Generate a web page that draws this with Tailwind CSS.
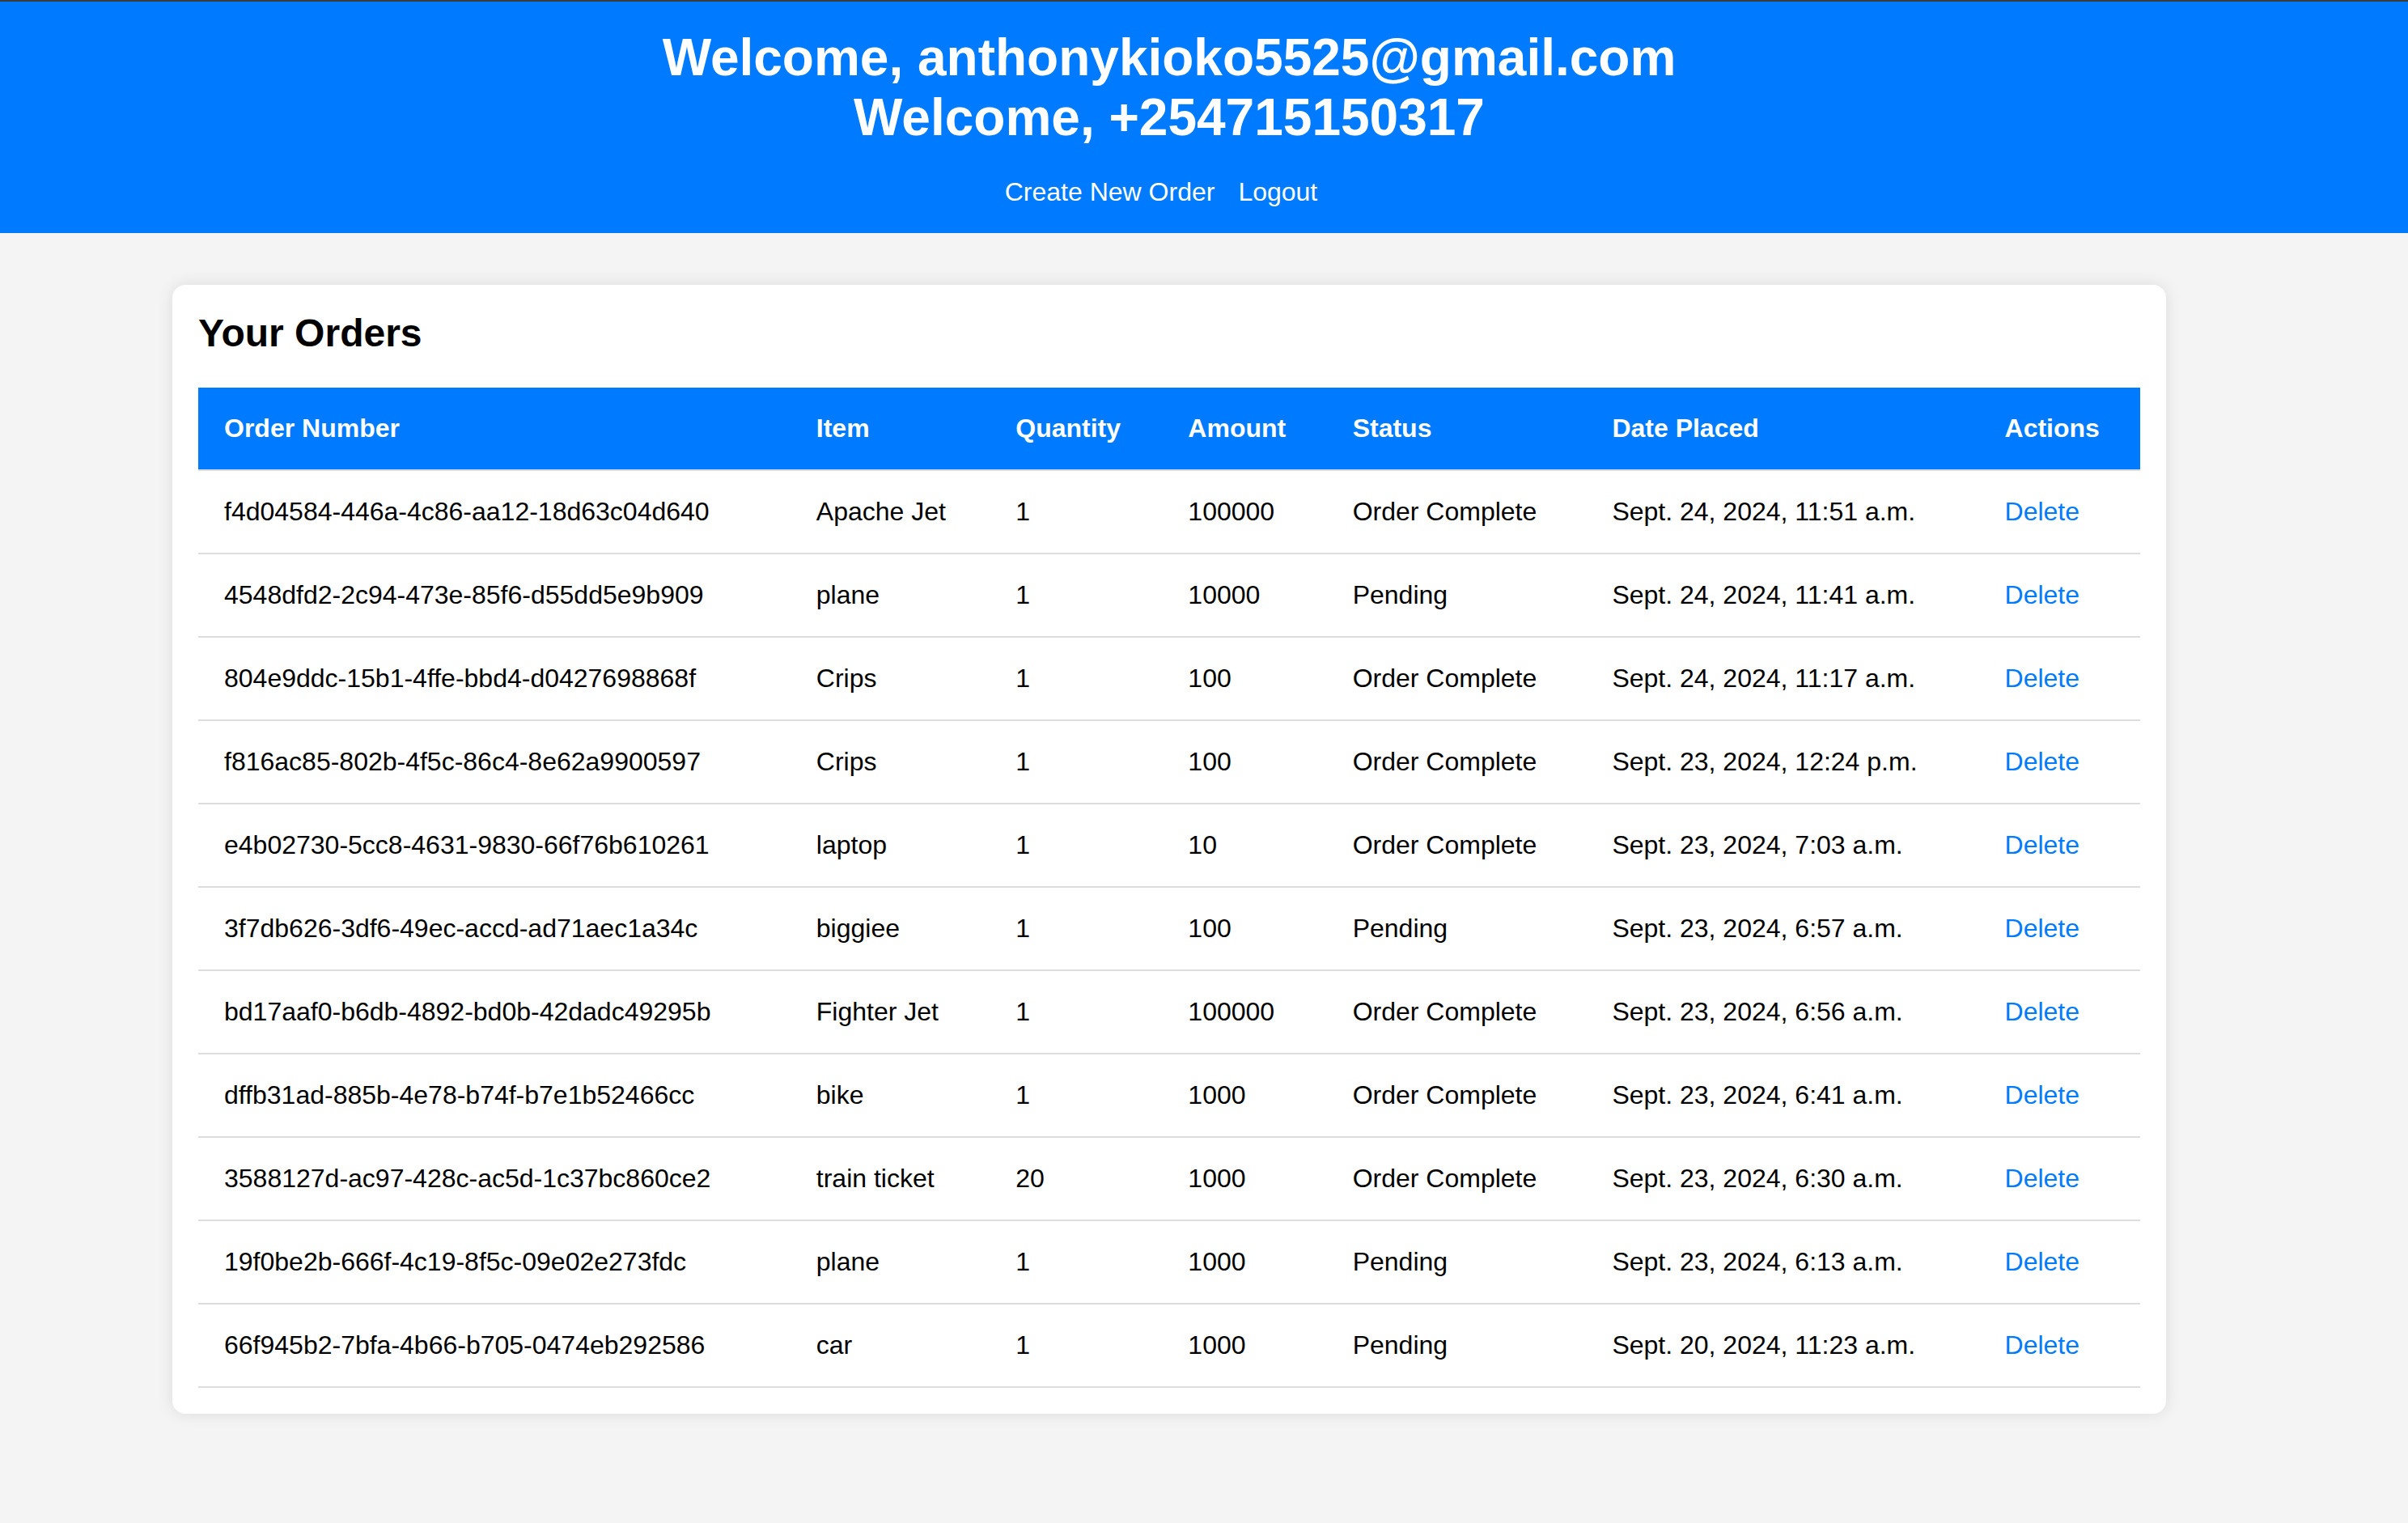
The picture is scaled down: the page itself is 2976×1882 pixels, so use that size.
<!DOCTYPE html>
<html lang="en">
<head>
<meta charset="utf-8">
<meta name="viewport" content="width=device-width, initial-scale=1">
<title>Your Orders</title>
<script src="https://cdn.jsdelivr.net/npm/@tailwindcss/browser@4"></script>
</head>
<body class="min-h-screen bg-[#f4f4f4] font-['Liberation_Sans',Arial,sans-serif] text-[32px] leading-[37px] text-black">
<header class="border-t-2 border-[#3c3c3c] bg-[#007bff] py-8 pr-[86px] text-center text-white">
  <h1 class="text-[64px] leading-[74px] font-bold">Welcome, anthonykioko5525@gmail.com<br>Welcome, +254715150317</h1>
  <nav class="mt-[37px] flex justify-center gap-[29px] pr-5">
    <a href="#">Create New Order</a>
    <a href="#">Logout</a>
  </nav>
</header>
<main class="py-16 pr-[86px]">
  <section class="mx-auto w-full max-w-[2464px] rounded-2xl bg-white p-8 shadow-[0_0_20px_rgba(0,0,0,0.1)]">
    <h2 class="mb-10 text-[48px] leading-[55px] font-bold">Your Orders</h2>
    <table class="w-full border-separate border-spacing-0 text-left [&_td]:border-b-2 [&_td]:border-[#ddd] [&_td]:p-8 [&_th]:border-b-2 [&_th]:border-[#ddd] [&_th]:bg-[#007bff] [&_th]:bg-clip-padding [&_th]:p-8 [&_a]:text-[#007bff]">
      <thead class="text-white">
        <tr><th>Order Number</th><th>Item</th><th>Quantity</th><th>Amount</th><th>Status</th><th>Date Placed</th><th>Actions</th></tr>
      </thead>
      <tbody>
        <tr><td>f4d04584-446a-4c86-aa12-18d63c04d640</td><td>Apache Jet</td><td>1</td><td>100000</td><td>Order Complete</td><td>Sept. 24, 2024, 11:51 a.m.</td><td><a href="#">Delete</a></td></tr>
        <tr><td>4548dfd2-2c94-473e-85f6-d55dd5e9b909</td><td>plane</td><td>1</td><td>10000</td><td>Pending</td><td>Sept. 24, 2024, 11:41 a.m.</td><td><a href="#">Delete</a></td></tr>
        <tr><td>804e9ddc-15b1-4ffe-bbd4-d0427698868f</td><td>Crips</td><td>1</td><td>100</td><td>Order Complete</td><td>Sept. 24, 2024, 11:17 a.m.</td><td><a href="#">Delete</a></td></tr>
        <tr><td>f816ac85-802b-4f5c-86c4-8e62a9900597</td><td>Crips</td><td>1</td><td>100</td><td>Order Complete</td><td>Sept. 23, 2024, 12:24 p.m.</td><td><a href="#">Delete</a></td></tr>
        <tr><td>e4b02730-5cc8-4631-9830-66f76b610261</td><td>laptop</td><td>1</td><td>10</td><td>Order Complete</td><td>Sept. 23, 2024, 7:03 a.m.</td><td><a href="#">Delete</a></td></tr>
        <tr><td>3f7db626-3df6-49ec-accd-ad71aec1a34c</td><td>biggiee</td><td>1</td><td>100</td><td>Pending</td><td>Sept. 23, 2024, 6:57 a.m.</td><td><a href="#">Delete</a></td></tr>
        <tr><td>bd17aaf0-b6db-4892-bd0b-42dadc49295b</td><td>Fighter Jet</td><td>1</td><td>100000</td><td>Order Complete</td><td>Sept. 23, 2024, 6:56 a.m.</td><td><a href="#">Delete</a></td></tr>
        <tr><td>dffb31ad-885b-4e78-b74f-b7e1b52466cc</td><td>bike</td><td>1</td><td>1000</td><td>Order Complete</td><td>Sept. 23, 2024, 6:41 a.m.</td><td><a href="#">Delete</a></td></tr>
        <tr><td>3588127d-ac97-428c-ac5d-1c37bc860ce2</td><td>train ticket</td><td>20</td><td>1000</td><td>Order Complete</td><td>Sept. 23, 2024, 6:30 a.m.</td><td><a href="#">Delete</a></td></tr>
        <tr><td>19f0be2b-666f-4c19-8f5c-09e02e273fdc</td><td>plane</td><td>1</td><td>1000</td><td>Pending</td><td>Sept. 23, 2024, 6:13 a.m.</td><td><a href="#">Delete</a></td></tr>
        <tr><td>66f945b2-7bfa-4b66-b705-0474eb292586</td><td>car</td><td>1</td><td>1000</td><td>Pending</td><td>Sept. 20, 2024, 11:23 a.m.</td><td><a href="#">Delete</a></td></tr>
      </tbody>
    </table>
  </section>
</main>
</body>
</html>
